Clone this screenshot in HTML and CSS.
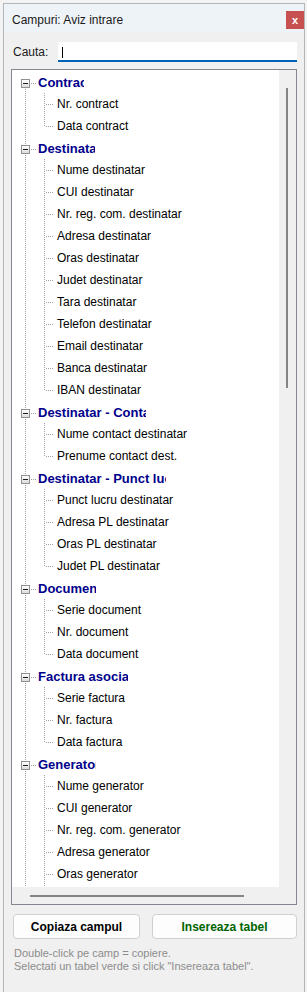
FILE: index.html
```html
<!DOCTYPE html>
<html lang="ro">

<head>
  <meta charset="UTF-8">
  <meta name="viewport" content="width=device-width, initial-scale=1.0">
  <link rel="stylesheet" href="styles.css">
  <title>Campuri: Aviz intrare</title>
</head>

<body>
  <div class="window">
    <header class="titlebar">
      <span class="title">Campuri: Aviz intrare</span>
      <span class="close">x</span>
    </header>

    <main class="content">
      <div class="search">
        <label class="search-label">Cauta:</label>
        <div class="search-input"><span class="caret"></span></div>
      </div>

      <div class="tree">
        <div class="tree-view">
          <div class="node head first"><span class="gut"><span class="toggle"></span></span><span class="name w-contract">Contract</span></div>
          <div class="node leaf"><span class="gut"></span><span class="branch"></span><span class="label">Nr. contract</span></div>
          <div class="node leaf last"><span class="gut"></span><span class="branch"></span><span class="label">Data contract</span></div>

          <div class="node head"><span class="gut"><span class="toggle"></span></span><span class="name w-dest">Destinatar</span></div>
          <div class="node leaf"><span class="gut"></span><span class="branch"></span><span class="label">Nume destinatar</span></div>
          <div class="node leaf"><span class="gut"></span><span class="branch"></span><span class="label">CUI destinatar</span></div>
          <div class="node leaf"><span class="gut"></span><span class="branch"></span><span class="label">Nr. reg. com. destinatar</span></div>
          <div class="node leaf"><span class="gut"></span><span class="branch"></span><span class="label">Adresa destinatar</span></div>
          <div class="node leaf"><span class="gut"></span><span class="branch"></span><span class="label">Oras destinatar</span></div>
          <div class="node leaf"><span class="gut"></span><span class="branch"></span><span class="label">Judet destinatar</span></div>
          <div class="node leaf"><span class="gut"></span><span class="branch"></span><span class="label">Tara destinatar</span></div>
          <div class="node leaf"><span class="gut"></span><span class="branch"></span><span class="label">Telefon destinatar</span></div>
          <div class="node leaf"><span class="gut"></span><span class="branch"></span><span class="label">Email destinatar</span></div>
          <div class="node leaf"><span class="gut"></span><span class="branch"></span><span class="label">Banca destinatar</span></div>
          <div class="node leaf last"><span class="gut"></span><span class="branch"></span><span class="label">IBAN destinatar</span></div>

          <div class="node head"><span class="gut"><span class="toggle"></span></span><span class="name w-contact">Destinatar - Contact</span></div>
          <div class="node leaf"><span class="gut"></span><span class="branch"></span><span class="label">Nume contact destinatar</span></div>
          <div class="node leaf last"><span class="gut"></span><span class="branch"></span><span class="label">Prenume contact dest.</span></div>

          <div class="node head"><span class="gut"><span class="toggle"></span></span><span class="name w-punct">Destinatar - Punct lucru</span></div>
          <div class="node leaf"><span class="gut"></span><span class="branch"></span><span class="label">Punct lucru destinatar</span></div>
          <div class="node leaf"><span class="gut"></span><span class="branch"></span><span class="label">Adresa PL destinatar</span></div>
          <div class="node leaf"><span class="gut"></span><span class="branch"></span><span class="label">Oras PL destinatar</span></div>
          <div class="node leaf last"><span class="gut"></span><span class="branch"></span><span class="label">Judet PL destinatar</span></div>

          <div class="node head"><span class="gut"><span class="toggle"></span></span><span class="name w-doc">Document</span></div>
          <div class="node leaf"><span class="gut"></span><span class="branch"></span><span class="label">Serie document</span></div>
          <div class="node leaf"><span class="gut"></span><span class="branch"></span><span class="label">Nr. document</span></div>
          <div class="node leaf last"><span class="gut"></span><span class="branch"></span><span class="label">Data document</span></div>

          <div class="node head"><span class="gut"><span class="toggle"></span></span><span class="name w-factura">Factura asociata</span></div>
          <div class="node leaf"><span class="gut"></span><span class="branch"></span><span class="label">Serie factura</span></div>
          <div class="node leaf"><span class="gut"></span><span class="branch"></span><span class="label">Nr. factura</span></div>
          <div class="node leaf last"><span class="gut"></span><span class="branch"></span><span class="label">Data factura</span></div>

          <div class="node head"><span class="gut"><span class="toggle"></span></span><span class="name w-gen">Generator</span></div>
          <div class="node leaf"><span class="gut"></span><span class="branch"></span><span class="label">Nume generator</span></div>
          <div class="node leaf"><span class="gut"></span><span class="branch"></span><span class="label">CUI generator</span></div>
          <div class="node leaf"><span class="gut"></span><span class="branch"></span><span class="label">Nr. reg. com. generator</span></div>
          <div class="node leaf"><span class="gut"></span><span class="branch"></span><span class="label">Adresa generator</span></div>
          <div class="node leaf"><span class="gut"></span><span class="branch"></span><span class="label">Oras generator</span></div>
          <div class="node leaf"><span class="gut"></span><span class="branch"></span><span class="label">Judet generator</span></div>
        </div>
        <div class="vscroll"><span class="vthumb"></span></div>
        <div class="hscroll"><span class="hthumb"></span></div>
        <div class="corner"></div>
      </div>

      <div class="actions">
        <button class="btn btn-copy">Copiaza campul</button>
        <button class="btn btn-insert">Insereaza tabel</button>
      </div>

      <p class="hint">Double-click pe camp = copiere.<br>Selectati un tabel verde si click "Insereaza tabel".</p>
    </main>
  </div>
</body>

</html>
```

FILE: styles.css
```css
body {
  margin: 0;
  font-family: "Liberation Sans", Arial, sans-serif;
  font-size: 12px;
  color: #000;
  background: #f3f3f3;
  overflow: hidden;
}

.window {
  box-sizing: border-box;
  inline-size: 302px;
  block-size: 989px;
  margin: 3px 0 0 3px;
  border: 1px solid #b4b4b4;
  border-block-end: 0;
  background: #f0f0f0;
}

.titlebar {
  display: flex;
  justify-content: space-between;
  align-items: flex-start;
  block-size: 29px;
  padding-inline-start: 8px;
  background: #eef3f8;
}

.title {
  margin-block-start: 9px;
  line-height: 14px;
  color: #1a1a1a;
}

.close {
  display: flex;
  justify-content: center;
  align-items: center;
  inline-size: 18px;
  block-size: 18px;
  margin-block-start: 7px;
  background: #c75050;
  color: #fff;
  font-size: 11px;
  font-weight: bold;
  line-height: 1;
}

.content {
  padding: 9px 7px 0;
}

/* search row */

.search {
  display: flex;
  align-items: center;
  block-size: 20px;
}

.search-label {
  inline-size: 45px;
  margin-inline-start: 2px;
  color: #1a1a1a;
}

.search-input {
  box-sizing: border-box;
  flex: 1;
  display: flex;
  align-items: center;
  block-size: 20px;
  padding-inline-start: 4px;
  background: #fff;
  border-block-end: 2px solid #0063b8;
}

.caret {
  inline-size: 1px;
  block-size: 11px;
  margin-block-start: 2px;
  background: #000;
}

/* tree view */

.tree {
  box-sizing: border-box;
  display: grid;
  grid-template-columns: 1fr 17px;
  grid-template-rows: 1fr 17px;
  block-size: 836px;
  margin-block-start: 7px;
  border: 1px solid #828790;
  background: #fff;
}

.tree-view {
  overflow: hidden;
  padding-block-start: 1px;
}

.vscroll,
.hscroll,
.corner {
  background: #f0f0f0;
}

.vscroll {
  display: flex;
  flex-direction: column;
}

.vthumb {
  inline-size: 2px;
  block-size: 300px;
  margin: 18px 0 0 7px;
  background: #858585;
}

.hscroll {
  display: flex;
}

.hthumb {
  inline-size: 214px;
  block-size: 2px;
  margin: 8px 0 0 18px;
  background: #858585;
}

.node {
  display: flex;
  align-items: center;
  block-size: 22px;
  white-space: nowrap;
}

.gut {
  align-self: stretch;
  inline-size: 23px;
  flex: none;
  background: repeating-linear-gradient(to bottom, #a0a0a0 0 1px, transparent 1px 2px) 13px 0 / 1px 100% no-repeat;
}

.head .gut {
  inline-size: 26px;
  background:
    repeating-linear-gradient(to bottom, #a0a0a0 0 1px, transparent 1px 2px) 13px 0 / 1px 100% no-repeat,
    repeating-linear-gradient(to right, #a0a0a0 0 1px, transparent 1px 2px) 19px 12px / 6px 1px no-repeat;
}

.head.first .gut {
  background:
    repeating-linear-gradient(to bottom, #a0a0a0 0 1px, transparent 1px 2px) 13px 12px / 1px 100% no-repeat,
    repeating-linear-gradient(to right, #a0a0a0 0 1px, transparent 1px 2px) 19px 12px / 6px 1px no-repeat;
}

.toggle {
  display: block;
  box-sizing: border-box;
  inline-size: 9px;
  block-size: 9px;
  margin: 8px 0 0 9px;
  border: 1px solid #919191;
  background:
    linear-gradient(#1e1e1e, #1e1e1e) center / 5px 1px no-repeat,
    linear-gradient(#fff, #dcdcdc);
}

.branch {
  align-self: stretch;
  inline-size: 22px;
  flex: none;
  background:
    repeating-linear-gradient(to bottom, #a0a0a0 0 1px, transparent 1px 2px) 9px 0 / 1px 100% no-repeat,
    repeating-linear-gradient(to right, #a0a0a0 0 1px, transparent 1px 2px) 11px 11px / 8px 1px no-repeat;
}

.last .branch {
  background:
    repeating-linear-gradient(to bottom, #a0a0a0 0 1px, transparent 1px 2px) 9px 0 / 1px 12px no-repeat,
    repeating-linear-gradient(to right, #a0a0a0 0 1px, transparent 1px 2px) 11px 11px / 8px 1px no-repeat;
}

.label {
  color: #000;
}

.name {
  display: inline-block;
  overflow: hidden;
  font-size: 13px;
  font-weight: bold;
  color: #00008b;
}

.w-contract { inline-size: 46px; }
.w-dest { inline-size: 57px; }
.w-contact { inline-size: 108px; }
.w-punct { inline-size: 128px; }
.w-doc { inline-size: 58px; }
.w-factura { inline-size: 90px; }
.w-gen { inline-size: 58px; }

/* buttons and hint */

.actions {
  display: flex;
  gap: 12px;
  margin: 9px 0 0 2px;
}

.btn {
  box-sizing: border-box;
  block-size: 25px;
  padding: 0;
  border: 1px solid #d0d0d0;
  border-radius: 4px;
  background: #fdfdfd;
  font-family: inherit;
  font-size: 12px;
  font-weight: bold;
}

.btn-copy {
  inline-size: 127px;
  color: #000;
}

.btn-insert {
  inline-size: 145px;
  color: #006400;
}

.hint {
  margin: 8px 0 0 3px;
  font-size: 11px;
  line-height: 13px;
  color: #8c8c8c;
}
```
